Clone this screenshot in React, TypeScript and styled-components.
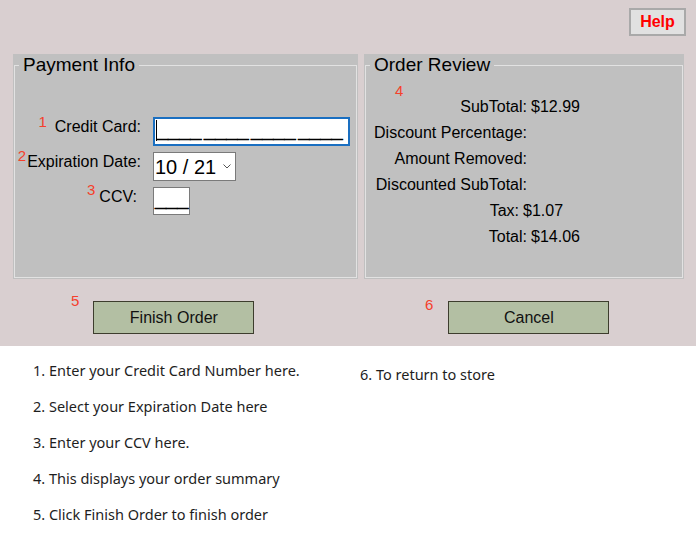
import React from 'react';
import styled, { createGlobalStyle } from 'styled-components';

const GlobalStyle = createGlobalStyle`
  html, body {
    margin: 0;
    padding: 0;
    background: #ffffff;
  }
  body {
    font-family: "Liberation Sans", Arial, sans-serif;
    color: #000000;
  }
`;

const summary = [
  { label: 'SubTotal:', value: '$12.99', marker: true },
  { label: 'Discount Percentage:', value: '' },
  { label: 'Amount Removed:', value: '' },
  { label: 'Discounted SubTotal:', value: '' },
  { label: 'Tax:', value: '$1.07', shift: -8 },
  { label: 'Total:', value: '$14.06' },
];

const notesLeft = [
  '1. Enter your Credit Card Number here.',
  '2. Select your Expiration Date here',
  '3. Enter your CCV here.',
  '4. This displays your order summary',
  '5. Click Finish Order to finish order',
];

const notesRight = ['6. To return to store'];

function App() {
  return (
    <Page>
      <GlobalStyle />
      <Top>
        <HelpBar>
          <HelpButton type="button">Help</HelpButton>
        </HelpBar>

        <Panels>
          <Panel $width={345}>
            <Box>
              <Legend>Payment Info</Legend>
              <FormGrid>
                <Label>
                  <Marker $gap={8} $raise={5}>1</Marker>Credit Card:
                </Label>
                <CardField>
                  <Caret />
                  <Mask>____ ____ ____ ____</Mask>
                </CardField>

                <Label>
                  <Marker $gap={1} $raise={6}>2</Marker>Expiration Date:
                </Label>
                <SelectWrap>
                  <ExpirySelect defaultValue="10/21">
                    <option value="10/21">10 / 21</option>
                    <option value="11/21">11 / 21</option>
                    <option value="12/21">12 / 21</option>
                  </ExpirySelect>
                  <Chevron width="8" height="5" viewBox="0 0 8 5">
                    <path d="M0.5 0.5 L4 4 L7.5 0.5" fill="none" stroke="#555" strokeWidth="1" />
                  </Chevron>
                </SelectWrap>

                <Label $trail={4}>
                  <Marker $gap={4} $raise={7}>3</Marker>CCV:
                </Label>
                <CcvField>___</CcvField>
              </FormGrid>
            </Box>
          </Panel>

          <Panel $width={320}>
            <Box>
              <Legend>Order Review</Legend>
              <ReviewList>
                {summary.map((row) => (
                  <Line key={row.label} $shift={row.shift ?? 0}>
                    <Term>
                      {row.marker && (
                        <Marker $gap={0} $raise={12} $push>
                          4
                        </Marker>
                      )}
                      {row.label}
                    </Term>
                    <Value>{row.value}</Value>
                  </Line>
                ))}
              </ReviewList>
            </Box>
          </Panel>
        </Panels>

        <Actions>
          <ActionCell $width={345} $indent={58}>
            <Marker $gap={14} $raise={9}>5</Marker>
            <ActionButton type="button">Finish Order</ActionButton>
          </ActionCell>
          <ActionCell $width={320} $indent={61}>
            <Marker $gap={15} $raise={5}>6</Marker>
            <ActionButton type="button">Cancel</ActionButton>
          </ActionCell>
        </Actions>
      </Top>

      <Notes>
        <NoteColumn $top={6}>
          {notesLeft.map((n) => (
            <Note key={n}>{n}</Note>
          ))}
        </NoteColumn>
        <NoteColumn $top={10}>
          {notesRight.map((n) => (
            <Note key={n}>{n}</Note>
          ))}
        </NoteColumn>
      </Notes>
    </Page>
  );
}

export default App;

const Page = styled.div`
  width: 696px;
`;

const Top = styled.div`
  background: #d9cfd0;
  padding: 8px 0 12px;
`;

const HelpBar = styled.div`
  display: flex;
  justify-content: flex-end;
  padding-right: 10px;
`;

const HelpButton = styled.button`
  width: 57px;
  height: 28px;
  box-sizing: border-box;
  margin: 0;
  padding: 0;
  background: #e1e1e1;
  border: 2px solid #a9a9a9;
  color: #ff0000;
  font-family: "Liberation Sans", Arial, sans-serif;
  font-size: 16px;
  font-weight: bold;
  cursor: pointer;
`;

const Panels = styled.div`
  display: flex;
  gap: 6px;
  padding-left: 13px;
  margin-top: 18px;
`;

const Panel = styled.section<{ $width: number }>`
  width: ${(p) => p.$width}px;
  height: 225px;
  box-sizing: border-box;
  background: #c0c0c0;
  padding: 0 1px 1px;
  display: flex;
`;

const Box = styled.fieldset`
  flex: 1;
  min-width: 0;
  margin: 0;
  padding: 0;
  border: 1px solid #e2e2e2;
`;

const Legend = styled.legend`
  margin-left: 4px;
  padding: 0 4px;
  font-size: 19px;
  line-height: 22px;
`;

const FormGrid = styled.div`
  display: grid;
  grid-template-columns: 126px auto;
  column-gap: 12px;
  row-gap: 6px;
  margin-top: 41px;
  justify-items: start;
  align-items: start;
`;

const Label = styled.label<{ $trail?: number }>`
  justify-self: end;
  padding-top: 1px;
  padding-right: ${(p) => p.$trail ?? 0}px;
  font-size: 16px;
  line-height: 18px;
  white-space: nowrap;
`;

const Marker = styled.span<{ $gap: number; $raise: number; $push?: boolean }>`
  position: relative;
  top: -${(p) => p.$raise}px;
  margin-right: ${(p) => (p.$push ? 'auto' : `${p.$gap}px`)};
  margin-left: ${(p) => (p.$push ? '19px' : '0')};
  color: #f5402c;
  font-size: 15px;
  line-height: 17px;
`;

const CardField = styled.div`
  width: 197px;
  height: 29px;
  box-sizing: border-box;
  border: 2px solid #1a6fc1;
  background: #ffffff;
  padding: 1px 0 0 1px;
  display: flex;
  align-items: flex-start;
`;

const Caret = styled.span`
  width: 1px;
  height: 21px;
  background: #000000;
  flex-shrink: 0;
`;

const Mask = styled.span`
  font-size: 20px;
  font-weight: bold;
  line-height: 20px;
  word-spacing: -3px;
  white-space: pre;
  -webkit-text-stroke: 0.6px #000000;
`;

const SelectWrap = styled.div`
  position: relative;
  width: 83px;
  height: 29px;
`;

const ExpirySelect = styled.select`
  appearance: none;
  width: 100%;
  height: 100%;
  box-sizing: border-box;
  margin: 0;
  padding: 0 0 0 1px;
  border: 1px solid #7a7a7a;
  border-radius: 0;
  background: #ffffff;
  color: #000000;
  font-family: "Liberation Sans", Arial, sans-serif;
  font-size: 20px;
  outline: none;
`;

const Chevron = styled.svg`
  position: absolute;
  right: 5px;
  top: 12px;
  pointer-events: none;
`;

const CcvField = styled.div`
  width: 37px;
  height: 28px;
  box-sizing: border-box;
  border: 1px solid #7a7a7a;
  background: #ffffff;
  padding: 1px 0 0 1px;
  font-size: 20px;
  font-weight: bold;
  line-height: 20px;
  -webkit-text-stroke: 0.6px #000000;
`;

const ReviewList = styled.div`
  margin-top: 18px;
  padding-left: 10px;
`;

const Line = styled.div<{ $shift: number }>`
  display: flex;
  font-size: 16px;
  line-height: 26px;
  transform: translateX(${(p) => p.$shift}px);
`;

const Term = styled.span`
  width: 151px;
  flex-shrink: 0;
  display: flex;
  justify-content: flex-end;
  white-space: nowrap;
`;

const Value = styled.span`
  margin-left: 4px;
  white-space: nowrap;
`;

const Actions = styled.div`
  display: flex;
  gap: 6px;
  padding-left: 13px;
  margin-top: 22px;
`;

const ActionCell = styled.div<{ $width: number; $indent: number }>`
  width: ${(p) => p.$width}px;
  box-sizing: border-box;
  padding-left: ${(p) => p.$indent}px;
  display: flex;
  align-items: flex-start;
`;

const ActionButton = styled.button`
  width: 161px;
  height: 33px;
  box-sizing: border-box;
  margin: 0;
  padding: 0;
  background: #b3bfa3;
  border: 1px solid #3d3d2d;
  color: #111111;
  font-family: "Liberation Sans", Arial, sans-serif;
  font-size: 16px;
  cursor: pointer;
`;

const Notes = styled.div`
  display: grid;
  grid-template-columns: 327px 1fr;
  padding-left: 33px;
  font-family: "Noto Sans", "DejaVu Sans", sans-serif;
  font-size: 14.5px;
  color: #1e1e1e;
`;

const NoteColumn = styled.div<{ $top: number }>`
  padding-top: ${(p) => p.$top}px;
`;

const Note = styled.p`
  margin: 0;
  line-height: 36px;
  white-space: nowrap;
`;
